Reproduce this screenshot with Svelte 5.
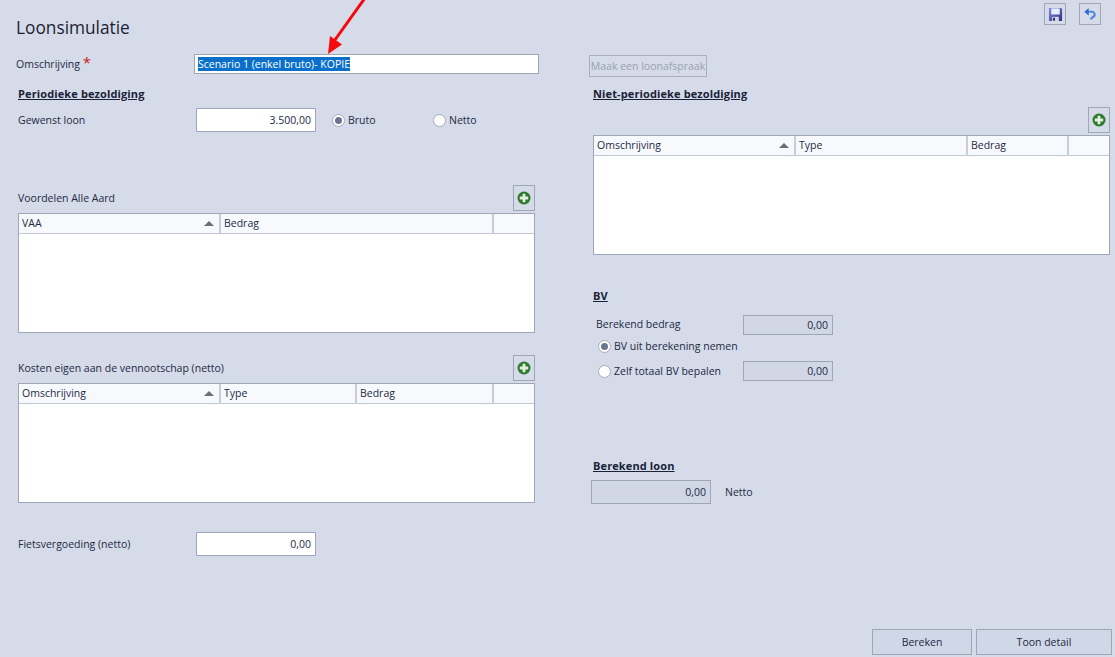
<script lang="ts">
  interface Col {
    label: string
    width: number
    sorted?: boolean
  }

  const vaaCols: Col[] = [
    { label: 'VAA', width: 202, sorted: true },
    { label: 'Bedrag', width: 273 }
  ]
  const kostenCols: Col[] = [
    { label: 'Omschrijving', width: 202, sorted: true },
    { label: 'Type', width: 136 },
    { label: 'Bedrag', width: 137 }
  ]
  const nietPeriodiekCols: Col[] = [
    { label: 'Omschrijving', width: 202, sorted: true },
    { label: 'Type', width: 172 },
    { label: 'Bedrag', width: 101 }
  ]
</script>

{#snippet plus()}
  <button type="button" class="tool add" aria-label="Toevoegen">
    <svg width="14" height="14" viewBox="0 0 14 14">
      <circle cx="7" cy="7" r="6.5" fill="#2c7a2e" />
      <path d="M5.6 2.8h2.8v2.8h2.8v2.8H8.4v2.8H5.6V8.4H2.8V5.6h2.8z" fill="#e4efe2" />
    </svg>
  </button>
{/snippet}

{#snippet grid(cols: Col[])}
  <div class="grid">
    <div class="grid-head">
      {#each cols as col}
        <div class="grid-col" style="width: {col.width}px">
          <span>{col.label}</span>
          {#if col.sorted}<i class="sort"></i>{/if}
        </div>
      {/each}
      <div class="grid-col rest"></div>
    </div>
  </div>
{/snippet}

<div class="page">
  <header class="top">
    <h1>Loonsimulatie</h1>
    <div class="tools">
      <button type="button" class="tool" aria-label="Opslaan">
        <svg width="15" height="15" viewBox="0 0 16 16">
          <defs>
            <linearGradient id="disk" x1="0" y1="0" x2="1" y2="1">
              <stop offset="0" stop-color="#7d8fe0" />
              <stop offset="1" stop-color="#2b2f86" />
            </linearGradient>
          </defs>
          <path d="M1 1h13l1 1v13H1z" fill="url(#disk)" />
          <rect x="3.5" y="1.5" width="9" height="6.5" fill="#e9edf8" />
          <rect x="4.5" y="10.5" width="7" height="4.5" fill="#d4d7e6" />
          <rect x="5.5" y="11.5" width="2" height="3" fill="#23264f" />
        </svg>
      </button>
      <button type="button" class="tool" aria-label="Ongedaan maken">
        <svg width="14" height="14" viewBox="0 0 16 16">
          <path d="M5 5.5h5.2a3 3 0 0 1 1.6 5.6L8.5 14" fill="none" stroke="#4a88e0" stroke-width="2.4" />
          <path d="M1.5 5.5 6.5 1v9z" fill="#2f6ccb" />
        </svg>
      </button>
    </div>
  </header>

  <div class="columns">
    <section class="left">
      <div class="name-row">
        <span class="name-label">Omschrijving <b class="req">*</b></span>
        <div class="name-input"><span class="selected">Scenario 1 (enkel bruto)- KOPIE</span></div>
      </div>

      <h2 class="periodic">Periodieke bezoldiging</h2>
      <div class="wage-row">
        <span class="row-label">Gewenst loon</span>
        <div class="num wage">3.500,00</div>
        <label class="radio bruto"><i class="dot on"></i>Bruto</label>
        <label class="radio"><i class="dot"></i>Netto</label>
      </div>

      <div class="grid-title vaa">
        <span>Voordelen Alle Aard</span>
        {@render plus()}
      </div>
      {@render grid(vaaCols)}

      <div class="grid-title kosten">
        <span>Kosten eigen aan de vennootschap (netto)</span>
        {@render plus()}
      </div>
      {@render grid(kostenCols)}

      <div class="wage-row bike">
        <span class="row-label">Fietsvergoeding (netto)</span>
        <div class="num wage">0,00</div>
      </div>
    </section>

    <section class="right">
      <button type="button" class="afspraak" disabled>Maak een loonafspraak</button>
      <h2 class="periodic">Niet-periodieke bezoldiging</h2>
      <div class="add-row">{@render plus()}</div>
      {@render grid(nietPeriodiekCols)}

      <h2 class="bv">BV</h2>
      <div class="bv-rows">
        <div class="bv-row first">
          <span class="bv-label">Berekend bedrag</span>
          <div class="num readonly">0,00</div>
        </div>
        <label class="radio bv-radio"><i class="dot on"></i>BV uit berekening nemen</label>
        <div class="bv-row">
          <label class="radio bv-radio inline"><i class="dot"></i>Zelf totaal BV bepalen</label>
          <div class="num readonly">0,00</div>
        </div>
      </div>

      <h2 class="result">Berekend loon</h2>
      <div class="result-row">
        <div class="num readonly result-box">0,00</div>
        <span>Netto</span>
      </div>
    </section>
  </div>

  <footer class="actions">
    <button type="button" class="action calc">Bereken</button>
    <button type="button" class="action detail">Toon detail</button>
  </footer>

  <svg class="arrow" width="50" height="60" viewBox="0 0 50 60" aria-hidden="true">
    <path d="M45 -2 12 44" stroke="#f5090f" stroke-width="3" fill="none" />
    <path d="M8 54 10 36 22 44.5z" fill="#f5090f" />
  </svg>
</div>

<style>
  :global(body) {
    margin: 0;
    background: #d5dbe8;
  }

  .page {
    position: relative;
    width: 1115px;
    height: 657px;
    overflow: hidden;
    background: #d5dbe8;
    color: #1e2a45;
    font-family: "Open Sans", "Noto Sans", sans-serif;
    font-size: 10.5px;
    line-height: 14px;
  }

  .top {
    display: flex;
    justify-content: space-between;
    height: 54px;
    padding: 3px 14px 0 16px;
    box-sizing: border-box;
  }

  h1 {
    margin: 13px 0 0;
    font-size: 17.3px;
    line-height: 24px;
    font-weight: 400;
    color: #1c2333;
  }

  .tools {
    display: flex;
    gap: 13px;
    align-items: flex-start;
  }

  .tool {
    display: flex;
    align-items: center;
    justify-content: center;
    width: 22px;
    height: 22px;
    padding: 0;
    background: transparent;
    border: 1px solid #9ea6b8;
    box-sizing: border-box;
  }

  .add {
    height: 26px;
  }

  .columns {
    display: grid;
    grid-template-columns: 589px 1fr;
  }

  .left {
    padding-left: 16px;
    box-sizing: border-box;
  }

  .right {
    padding-right: 5px;
    display: flex;
    flex-direction: column;
  }

  .name-row {
    display: flex;
    align-items: flex-start;
    width: 523px;
  }

  .name-label {
    width: 178px;
    padding-top: 3px;
  }

  .req {
    color: #d4141c;
    font-size: 15px;
    line-height: 10px;
    font-weight: 400;
  }

  .name-input {
    flex: 1;
    height: 20px;
    padding: 2px 3px;
    box-sizing: border-box;
    background: #fff;
    border: 1px solid #9ea6b8;
    line-height: 14px;
  }

  .selected {
    display: inline-block;
    background: #0a6fc9;
    color: #fff;
  }

  h2 {
    margin: 0;
    font-size: 11px;
    line-height: 14px;
    font-weight: 700;
    letter-spacing: 0.12px;
    text-decoration: underline;
    color: #1a2238;
  }

  .periodic {
    margin-top: 13px;
    padding-left: 2px;
  }

  .wage-row {
    display: flex;
    align-items: center;
    height: 24px;
    margin-top: 7px;
    padding-left: 2px;
  }

  .row-label {
    width: 178px;
  }

  .num {
    box-sizing: border-box;
    border: 1px solid #9ea6b8;
    text-align: right;
    padding-right: 4px;
  }

  .wage {
    width: 120px;
    height: 24px;
    line-height: 22px;
    background: #fff;
  }

  .radio {
    display: flex;
    align-items: center;
    gap: 3px;
  }

  .bruto {
    width: 101px;
    margin-left: 16px;
  }

  .dot {
    display: block;
    position: relative;
    width: 13px;
    height: 13px;
    box-sizing: border-box;
    border: 1px solid #a4abbb;
    border-radius: 50%;
    background: #fff;
  }

  .dot.on::after {
    content: '';
    position: absolute;
    inset: 2px;
    border-radius: 50%;
    background: #6b7690;
  }

  .grid-title {
    display: flex;
    justify-content: space-between;
    align-items: center;
    width: 517px;
    height: 26px;
    margin-left: 2px;
    margin-bottom: 2px;
  }

  .vaa {
    margin-top: 53px;
  }

  .kosten {
    margin-top: 22px;
  }

  .grid {
    width: 517px;
    height: 120px;
    margin-left: 2px;
    box-sizing: border-box;
    background: #fff;
    border: 1px solid #9ea6b8;
    flex: none;
  }

  .right .grid {
    margin-left: 4px;
  }

  .grid-head {
    display: flex;
    height: 20px;
    box-sizing: border-box;
    background: #f7f9fd;
    border-bottom: 1px solid #c3c8d6;
  }

  .grid-col {
    display: flex;
    align-items: center;
    justify-content: space-between;
    box-sizing: border-box;
    padding: 0 5px 2px 3px;
    border-right: 2px solid #c9cdda;
  }

  .rest {
    flex: 1;
    border-right: 0;
  }

  .sort {
    width: 0;
    height: 0;
    margin-top: 2px;
    border-left: 5px solid transparent;
    border-right: 5px solid transparent;
    border-bottom: 5px solid #6a6f7a;
  }

  .bike {
    margin-top: 29px;
  }

  .afspraak {
    align-self: flex-start;
    width: 118px;
    height: 22px;
    margin-top: 1px;
    padding: 0;
    background: transparent;
    border: 1px solid #aab0c0;
    color: #9aa1b3;
    font: inherit;
    white-space: nowrap;
  }

  .right .periodic {
    margin-top: 10px;
    padding-left: 4px;
  }

  .add-row {
    display: flex;
    justify-content: flex-end;
    margin-top: 6px;
    margin-bottom: 2px;
  }

  .bv {
    margin-top: 34px;
    margin-left: 4px;
  }

  .bv-rows {
    margin-top: 12px;
    margin-left: 7px;
  }

  .bv-row {
    display: flex;
    align-items: center;
    height: 20px;
  }

  .bv-label {
    width: 147px;
    padding-bottom: 2px;
  }

  .readonly {
    width: 90px;
    height: 20px;
    line-height: 18px;
    background: #d1d7e4;
  }

  .bv-radio {
    height: 22px;
    margin-left: 2px;
  }

  .inline {
    width: 145px;
  }

  .bv-rows > .bv-radio {
    height: 26px;
    padding-bottom: 4px;
    box-sizing: border-box;
  }

  .result {
    margin-top: 78px;
    margin-left: 4px;
  }

  .result-row {
    display: flex;
    align-items: center;
    gap: 14px;
    margin-top: 7px;
    margin-left: 2px;
  }

  .result-box {
    width: 120px;
    height: 24px;
    line-height: 22px;
  }

  .actions {
    position: absolute;
    right: 3px;
    bottom: 2px;
    display: flex;
    gap: 4px;
  }

  .action {
    height: 26px;
    padding: 0;
    background: #d0d7e6;
    border: 1px solid #9ea6b8;
    color: #1e2a45;
    font: inherit;
  }

  .calc {
    width: 100px;
  }

  .detail {
    width: 136px;
  }

  .arrow {
    position: absolute;
    left: 320px;
    top: 0;
  }
</style>
